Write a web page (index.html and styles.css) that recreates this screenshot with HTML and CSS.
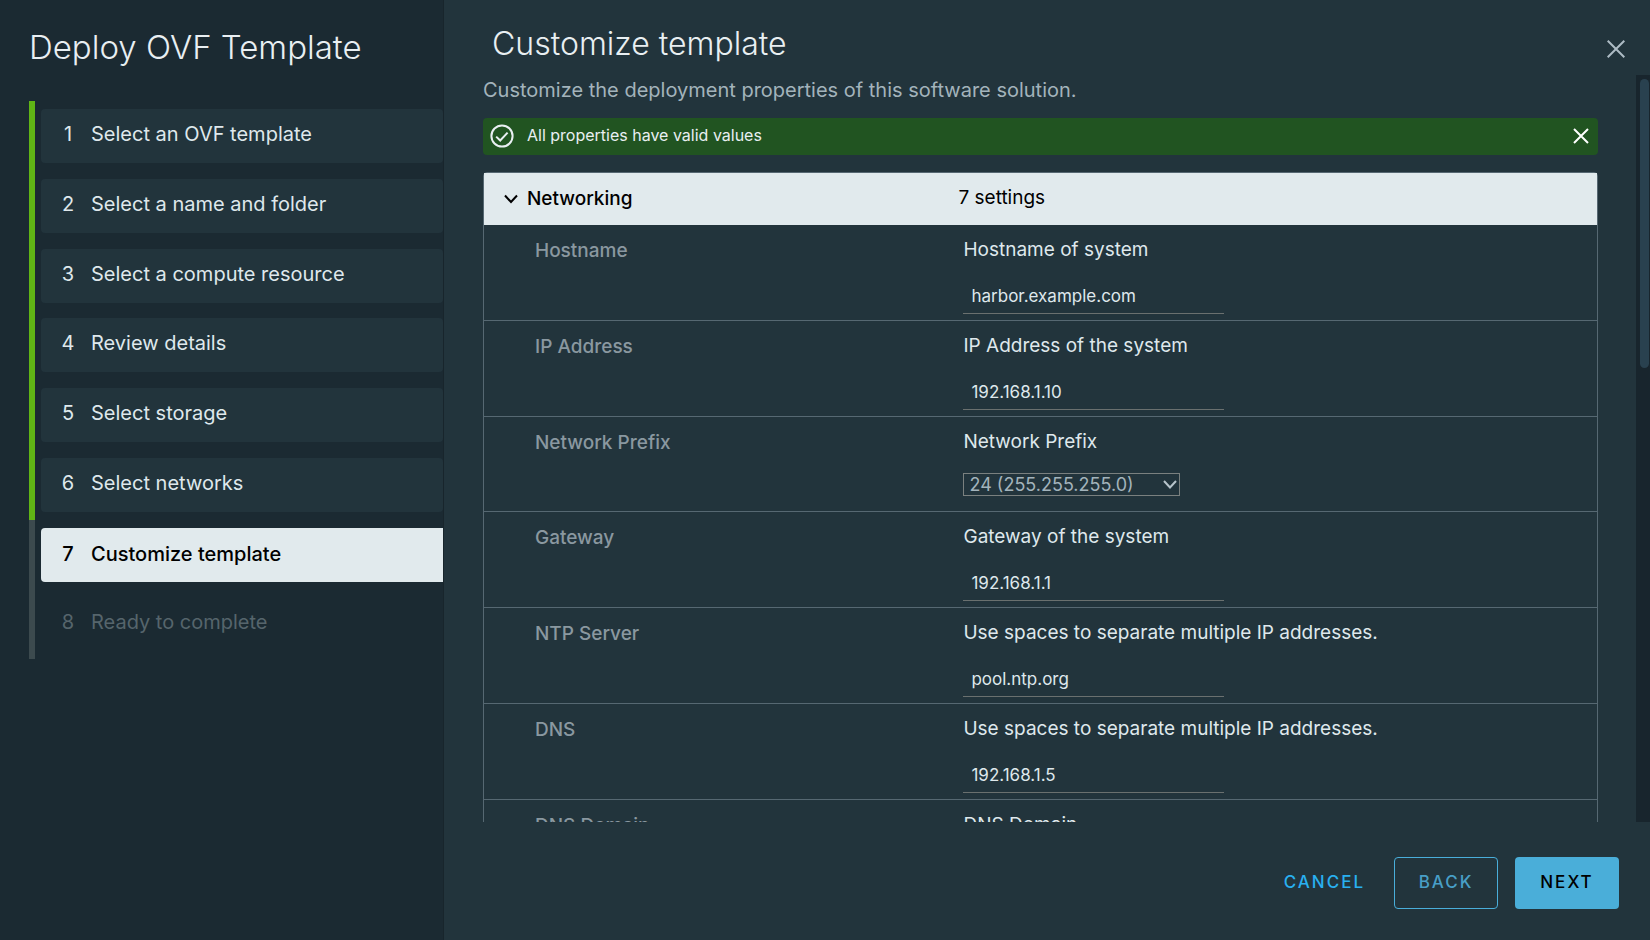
FILE: index.html
```html
<!DOCTYPE html>
<html lang="en">
<head>
<meta charset="utf-8">
<title>Deploy OVF Template</title>
<link rel="stylesheet" href="styles.css">
</head>
<body>
<div class="wizard">
  <nav class="sidebar" aria-label="Wizard steps">
    <h1 class="wizard-title">Deploy OVF Template</h1>
    <ol class="steps">
      <li class="step done"><button class="step-button" type="button"><span class="step-number">1</span><span>Select an OVF template</span></button></li>
      <li class="step done"><button class="step-button" type="button"><span class="step-number">2</span><span>Select a name and folder</span></button></li>
      <li class="step done"><button class="step-button" type="button"><span class="step-number">3</span><span>Select a compute resource</span></button></li>
      <li class="step done"><button class="step-button" type="button"><span class="step-number">4</span><span>Review details</span></button></li>
      <li class="step done"><button class="step-button" type="button"><span class="step-number">5</span><span>Select storage</span></button></li>
      <li class="step done"><button class="step-button" type="button"><span class="step-number">6</span><span>Select networks</span></button></li>
      <li class="step current"><button class="step-button" type="button" aria-current="step"><span class="step-number">7</span><span>Customize template</span></button></li>
      <li class="step"><button class="step-button" type="button" disabled><span class="step-number">8</span><span>Ready to complete</span></button></li>
    </ol>
  </nav>

  <main class="content">
    <header class="page-header">
      <h2 class="page-title">Customize template</h2>
      <button class="icon-button close-wizard" type="button" aria-label="Close">
        <svg width="18" height="18" viewBox="0 0 18 18"><path d="M.7.7 17.3 17.3M17.3.7.7 17.3"/></svg>
      </button>
    </header>

    <div class="scroll-region">
      <div class="scroll-body">
        <p class="subtitle">Customize the deployment properties of this software solution.</p>
        <div class="alert" role="status">
          <svg class="alert-icon" width="24" height="24" viewBox="0 0 24 24"><circle cx="12" cy="12" r="10.6"/><path d="M6.2 12.6 10.2 16.5 17.6 8.6"/></svg>
          <span class="alert-text">All properties have valid values</span>
          <button class="icon-button alert-close" type="button" aria-label="Dismiss">
            <svg width="16" height="16" viewBox="0 0 16 16"><path d="M1 1 15 15M15 1 1 15"/></svg>
          </button>
        </div>

        <table class="settings">
          <thead>
            <tr>
              <th class="group-cell" scope="col">
                <button class="group-toggle" type="button" aria-expanded="true">
                  <svg class="caret" width="14" height="10" viewBox="0 0 14 10"><path d="M1 1.5 7 8 13 1.5"/></svg>
                  <span>Networking</span>
                </button>
              </th>
              <th class="count-cell" scope="col">7 settings</th>
            </tr>
          </thead>
          <tbody>
            <tr>
              <th class="name-cell" scope="row">Hostname</th>
              <td class="value-cell"><label class="hint" for="hostname">Hostname of system</label><input class="field" id="hostname" type="text" value="harbor.example.com"></td>
            </tr>
            <tr>
              <th class="name-cell" scope="row">IP Address</th>
              <td class="value-cell"><label class="hint" for="ip">IP Address of the system</label><input class="field" id="ip" type="text" value="192.168.1.10"></td>
            </tr>
            <tr>
              <th class="name-cell" scope="row">Network Prefix</th>
              <td class="value-cell"><label class="hint" for="prefix">Network Prefix</label>
                <div class="select-wrap">
                  <select class="select" id="prefix"><option>24 (255.255.255.0)</option></select>
                  <svg class="select-arrow" width="14" height="9" viewBox="0 0 14 9"><path d="M1 1 7 7.5 13 1"/></svg>
                </div>
              </td>
            </tr>
            <tr>
              <th class="name-cell" scope="row">Gateway</th>
              <td class="value-cell"><label class="hint" for="gateway">Gateway of the system</label><input class="field" id="gateway" type="text" value="192.168.1.1"></td>
            </tr>
            <tr>
              <th class="name-cell" scope="row">NTP Server</th>
              <td class="value-cell"><label class="hint" for="ntp">Use spaces to separate multiple IP addresses.</label><input class="field" id="ntp" type="text" value="pool.ntp.org"></td>
            </tr>
            <tr>
              <th class="name-cell" scope="row">DNS</th>
              <td class="value-cell"><label class="hint" for="dns">Use spaces to separate multiple IP addresses.</label><input class="field" id="dns" type="text" value="192.168.1.5"></td>
            </tr>
            <tr>
              <th class="name-cell" scope="row">DNS Domain</th>
              <td class="value-cell"><label class="hint" for="domain">DNS Domain</label><input class="field" id="domain" type="text"></td>
            </tr>
          </tbody>
        </table>
      </div>
      <div class="scroll-track"><div class="scroll-thumb"></div></div>
    </div>

    <footer class="actions">
      <button class="button link" type="button">CANCEL</button>
      <button class="button outline" type="button">BACK</button>
      <button class="button primary" type="button">NEXT</button>
    </footer>
  </main>
</div>
</body>
</html>
```
FILE: styles.css
```css
* {
  box-sizing: border-box;
}

body {
  margin: 0;
  background: #22343c;
  color: #dfe8ec;
  font-family: Metropolis, Inter, "Open Sans", sans-serif;
  font-size: 19px;
  line-height: 24px;
}

button,
input,
select {
  margin: 0;
  font: inherit;
  color: inherit;
}

button {
  padding: 0;
  border: 0;
  background: none;
  cursor: pointer;
}

svg {
  display: block;
  fill: none;
  stroke: currentColor;
  stroke-width: 2;
}

.wizard {
  display: grid;
  grid-template-columns: 444px 1fr;
  height: 100vh;
}

/* Step list */

.sidebar {
  padding: 27px 0 0 29px;
  background: #1b2a32;
  border-right: 1px solid #18252c;
}

.wizard-title,
.page-title {
  margin: 0;
  font-size: 33px;
  font-weight: 300;
  line-height: 40px;
  color: #e9eff2;
}

.page-title {
  font-size: 32px;
}

.steps {
  display: flex;
  flex-direction: column;
  min-height: 558px;
  margin: 34px 0 0;
  padding: 0;
  list-style: none;
}

.step {
  flex: 1;
  padding: 8px 0 7px 6px;
  border-left: 6px solid #3c4a4e;
}

.step.done {
  border-left-color: #60b515;
}

.step-button {
  display: flex;
  align-items: center;
  gap: 13px;
  width: 100%;
  height: 54px;
  padding: 0 17px 4px;
  border-radius: 4px;
  font-size: 20px;
  text-align: left;
}

.step-number {
  width: 20px;
  text-align: center;
}

.step.done .step-button {
  background: #22343c;
}

.step.current .step-button {
  padding-bottom: 2px;
  border-radius: 4px 0 0 4px;
  background: #e1eaed;
  color: #000;
  font-weight: 500;
}

.step-button:disabled {
  color: #56656c;
}

/* Page */

.content {
  display: flex;
  flex-direction: column;
  min-width: 0;
  min-height: 0;
}

.page-header {
  display: flex;
  justify-content: space-between;
  height: 75px;
  padding: 24px 24px 0 48px;
}

.icon-button {
  display: grid;
  place-items: center;
}

.close-wizard {
  width: 20px;
  height: 50px;
  color: #adbbc4;
}

.scroll-region {
  display: flex;
  flex: 1;
  min-height: 0;
  overflow: hidden;
}

.scroll-body {
  flex: 1;
  padding: 0 38px 0 39px;
}

.scroll-track {
  width: 14px;
  padding: 4px 1px 0 4px;
  background: #18252d;
}

.scroll-thumb {
  height: 289px;
  border-radius: 5px;
  background: #29414f;
}

.subtitle {
  margin: 3px 0 16px;
  font-size: 20px;
  color: #a3b3bb;
}

.alert {
  display: flex;
  align-items: center;
  height: 37px;
  padding: 0 9px 1px 7px;
  border-radius: 4px;
  background: #215421;
  color: #e9eff2;
}

.alert-text {
  flex: 1;
  padding: 0 0 3px 13px;
  font-size: 16px;
}

.alert-close {
  width: 17px;
  height: 32px;
  color: #fff;
}

/* Settings table */

.settings {
  width: 100%;
  margin-top: 17px;
  border: 1px solid #566872;
  border-radius: 4px;
  border-spacing: 0;
  table-layout: fixed;
}

.settings th,
.settings td {
  padding: 0;
  text-align: left;
  vertical-align: top;
}

.settings thead th {
  height: 52px;
  background: #e1eaed;
  color: #000;
  vertical-align: middle;
}

.settings .group-cell {
  width: 42%;
  padding-left: 20px;
}

.settings .count-cell {
  padding: 0 0 2px 7px;
  font-weight: 400;
}

.group-toggle {
  display: flex;
  align-items: center;
  gap: 9px;
  font-weight: 500;
}

.settings tbody th,
.settings tbody td {
  border-bottom: 1px solid #566872;
}

.settings .name-cell {
  padding: 14px 0 0 51px;
  color: #8a98a0;
  font-weight: 500;
}

.settings .value-cell {
  padding: 13px 0 6px 12px;
}

.hint {
  display: block;
}

.field {
  display: block;
  width: 261px;
  height: 34px;
  margin-top: 18px;
  padding: 0 8px 2px;
  border: 0;
  border-bottom: 1px solid #6a706f;
  border-radius: 0;
  outline: 0;
  background: transparent;
  font-size: 17px;
}

.select-wrap {
  display: grid;
  align-items: center;
  width: 217px;
  margin: 19px 0 9px;
}

.select,
.select-arrow {
  grid-area: 1 / 1;
}

.select {
  width: 100%;
  height: 23px;
  padding: 0 24px 0 5px;
  appearance: none;
  border: 1px solid #7a807f;
  border-radius: 0;
  background: transparent;
  color: #a3b3bb;
  font-size: 18px;
  line-height: 20px;
}

.select-arrow {
  justify-self: end;
  margin-right: 3px;
  color: #b7c4cb;
  pointer-events: none;
}

/* Footer */

.actions {
  display: flex;
  justify-content: flex-end;
  gap: 17px;
  padding: 35px 31px 31px;
}

.button {
  min-width: 104px;
  height: 52px;
  padding-bottom: 2px;
  border-radius: 4px;
  font-size: 17px;
  font-weight: 500;
  letter-spacing: 2px;
}

.button.link {
  min-width: 0;
  padding: 0 12px 2px;
  color: #29b0f0;
}

.button.outline {
  border: 1px solid #49aeda;
  color: #489fc7;
}

.button.primary {
  background: #4aaed9;
  color: #000;
}
```
